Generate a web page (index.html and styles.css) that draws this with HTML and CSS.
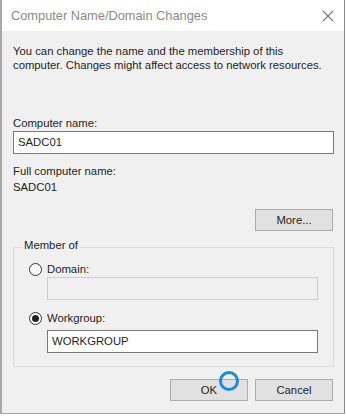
FILE: index.html
```html
<!DOCTYPE html>
<html lang="en">
<head>
  <meta charset="UTF-8">
  <title>Computer Name/Domain Changes</title>
  <link rel="stylesheet" href="styles.css">
</head>
<body>
  <div class="window">
    <div class="titlebar">
      <span class="title">Computer Name/Domain Changes</span>
      <svg class="close" width="12" height="12" viewBox="0 0 12 12">
        <path d="M1 1L11 11M11 1L1 11" stroke="#7a7a7a" stroke-width="1.2" fill="none"/>
      </svg>
    </div>
    <div class="content">
      <p class="intro">You can change the name and the membership of this computer. Changes might affect access to network resources.</p>

      <label class="label name-label">Computer name:</label>
      <div class="textbox">SADC01</div>

      <div class="label full-label">Full computer name:</div>
      <div class="label">SADC01</div>

      <div class="more-row">
        <div class="button">More...</div>
      </div>

      <div class="groupbox">
        <span class="legend">Member of</span>
        <div class="radio-row">
          <span class="radio"></span>
          <span>Domain:</span>
        </div>
        <div class="textbox disabled"></div>
        <div class="radio-row workgroup">
          <span class="radio checked"></span>
          <span>Workgroup:</span>
        </div>
        <div class="textbox wg-box">WORKGROUP</div>
      </div>

      <div class="actions">
        <div class="button ok">OK<span class="cursor"></span></div>
        <div class="button">Cancel</div>
      </div>
    </div>
  </div>
</body>
</html>
```

FILE: styles.css
```css
body {
  margin: 0;
  background: #fff;
  font-family: 'Liberation Sans', Arial, sans-serif;
  font-size: 11.3px;
  color: #1e1e1e;
}
.window {
  width: 342px;
  height: 413px;
  background: #f0f0f0;
  border-left: 2px solid #a8a8a8;
  border-right: 1px solid #8c8c8c;
  border-bottom: 1px solid #a8a8a8;
  display: flex;
  flex-direction: column;
}
.titlebar {
  height: 31px;
  background: #fff;
  display: flex;
  align-items: center;
  justify-content: space-between;
  padding: 0 10px 0 9px;
  flex-shrink: 0;
}
.title {
  font-size: 12.8px;
  color: #8a8a8a;
}
.content {
  padding: 0 10px 0 11px;
}
.intro {
  margin: 13px 0 0;
  line-height: 14px;
}
.label {
  display: block;
  line-height: 16px;
}
.name-label {
  margin-top: 43px;
}
.textbox {
  height: 21px;
  border: 1px solid #7a7a7a;
  background: #fff;
  line-height: 21px;
  padding-left: 4px;
}
.full-label {
  margin-top: 9px;
}
.more-row {
  display: flex;
  justify-content: flex-end;
  margin-top: 14px;
  padding-right: 1px;
}
.button {
  width: 76px;
  height: 20px;
  border: 1px solid #adadad;
  background: #e1e1e1;
  line-height: 20px;
  text-align: center;
  position: relative;
}
.groupbox {
  box-sizing: border-box;
  margin-top: 16px;
  border: 1px solid #dcdcdc;
  height: 120px;
  position: relative;
  padding: 13px 15px 0 33px;
}
.legend {
  position: absolute;
  top: -9px;
  left: 8px;
  padding: 0 2px;
  background: #f0f0f0;
}
.radio-row {
  display: flex;
  align-items: center;
  gap: 5px;
  margin-left: -18px;
  height: 16px;
}
.workgroup {
  margin-top: 10px;
}
.radio {
  width: 11px;
  height: 11px;
  border: 1px solid #333;
  border-radius: 50%;
  background: #fff;
  position: relative;
}
.radio.checked::after {
  content: "";
  position: absolute;
  left: 2px;
  top: 2px;
  width: 7px;
  height: 7px;
  border-radius: 50%;
  background: #222;
}
.wg-box {
  margin-top: 4px;
}
.disabled {
  border-color: #cfcfcf;
  background: #f0f0f0;
}
.actions {
  display: flex;
  justify-content: flex-end;
  gap: 7px;
  margin-top: 12px;
  padding-right: 1px;
}
.cursor {
  position: absolute;
  left: 48px;
  top: -9px;
  width: 14px;
  height: 14px;
  border: 3px solid #1a8ad8;
  border-radius: 50%;
}
```
